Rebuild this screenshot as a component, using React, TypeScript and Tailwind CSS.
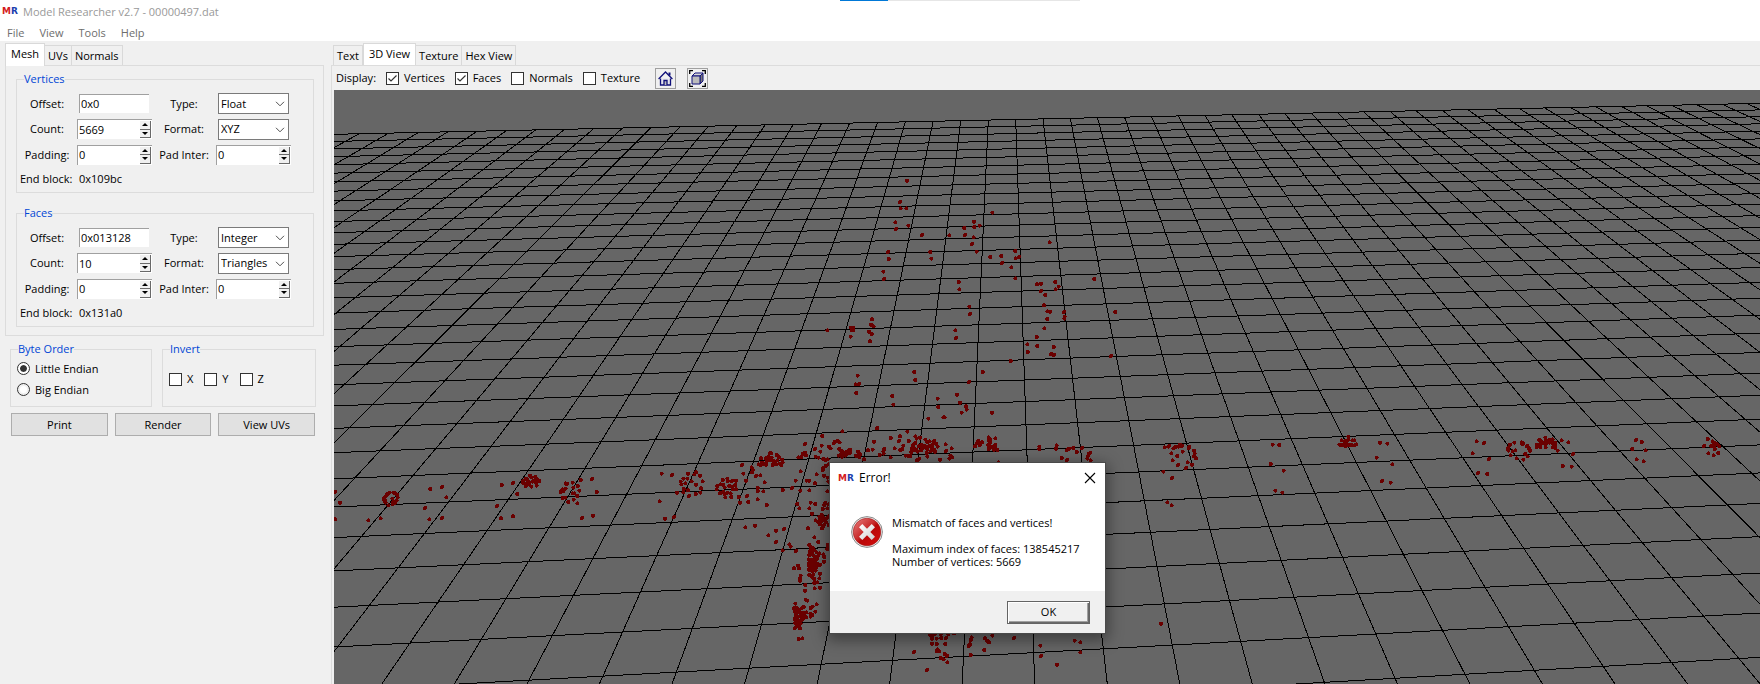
import React, { useId } from "react";

type Pair = [number, number];

const rowEnds = (j: number): Pair => [
  (4.357 * j + 134.3) / (1 - 0.01968 * j),
  (4.397 * j + 103.3) / (1 - 0.01965 * j),
];

const columnEnds = (k: number) => {
  const top = (1015.7 + 29.185 * k) / (1 + 0.001762 * k);
  return { top, topY: 134.3 - 0.02174 * (top - 334), bottom: 1034.7 + 72.55 * k };
};

const gridPath = [
  ...Array.from({ length: 33 }, (_, j) => {
    const [l, r] = rowEnds(j);
    return `M334 ${l.toFixed(1)}L1760 ${r.toFixed(1)}`;
  }),
  ...Array.from({ length: 52 }, (_, i) => {
    const c = columnEnds(i - 23);
    return `M${c.top.toFixed(1)} ${c.topY.toFixed(1)}L${c.bottom.toFixed(1)} 684`;
  }),
].join("");

/* Vertex clouds: origin in scene units, points in thirds of a unit. */
const clouds: { origin: Pair; points: string }[] = [
  {
    origin: [800, 90],
    points:
      "321,272 300,336 302,355 319,355 286,397 288,417 325,407 366,435 448,436 577,368 522,395 523,411 539,407 493,414 495,435 521,442 516,462 530,485 264,486 266,507 391,486 394,506 571,501 604,498 606,519 646,483 657,501 647,505 634,532 646,565 749,457 883,567 250,545 252,567 476,576 478,598 711,583 723,581 723,603 736,615 766,576 776,590 767,598 732,646 742,664 750,665 742,687 792,666 794,680 793,686 946,666 508,650 510,672 466,721 468,744 82,721 153,713 160,713 155,720 160,720 152,740 216,688 213,704 221,709 207,725 215,732 210,754 733,715 710,741 712,768 682,763 683,786 761,771 753,792 762,795 933,798 632,813 548,846 507,876 343,846 346,870 173,857 167,883 177,882 169,909 277,918 280,944 413,926 415,951 471,914 480,938 498,949 500,959 485,968 576,968 385,986 430,982 434,982 231,1014 127,1024 67,1039",
  },
  {
    origin: [330, 430],
    points:
      "15,186 30,218 16,268 115,271 152,265 178,188 190,188 197,190 202,195 203,203 200,212 196,218 188,222 175,226 167,218 162,208 163,202 168,198 172,192 187,206 190,214 165,213 301,177 336,171 349,202 285,234 298,268 336,264 515,165 549,159 562,192 501,228 513,265 549,259 600,137 604,142 616,141 588,146 580,152 592,150 596,156 612,152 622,148 628,153 608,155 618,158 579,158 586,162 597,162 588,168 604,170 620,167 711,162 707,160 728,158 752,150 786,147 743,168 730,173 698,178 692,186 700,184 694,182 748,182 733,190 728,190 742,198 731,209 715,216 706,203 698,204 742,220 707,176 800,186 756,264 789,257 995,131 1026,135 989,214 1005,266 1032,261 1041,188 1074,131 1098,127 1093,133 1110,137 1072,146 1060,146 1052,155 1054,163 1066,160 1085,154 1118,154 1061,177 1074,181 1098,164 1113,175 1097,192 1077,198 1060,187 1111,188 1178,150 1192,146 1193,153 1206,153 1218,152 1172,163 1162,168 1160,178 1180,165 1184,172 1198,168 1208,170 1216,165 1218,178 1180,186 1184,194 1192,188 1202,190 1186,202 1204,201 1170,190 1208,178 1226,201 1230,218 1251,198 1255,216 1248,152 1240,131 1236,105 1265,112 1268,120 1266,127 1278,138 1291,136 1304,157 1283,174 1283,183 1300,184 1283,208 1310,225 1246,292 1275,287 1315,316 1320,69 1308,85 1293,85 1316,80 1286,103 1292,105 1296,98 1302,102 1308,104 1310,95 1318,90",
  },
  {
    origin: [770, 425],
    points:
      "321,10 217,19 412,20 157,33 105,57 195,50 202,48 209,52 192,54 312,50 362,39 390,34 436,34 440,41 450,38 387,48 416,48 466,44 472,52 479,49 492,48 486,60 498,56 503,65 527,58 545,70 528,78 541,92 547,97 538,101 155,62 135,72 151,80 177,65 182,70 105,83 98,87 108,91 85,97 93,97 137,95 145,98 160,102 166,106 173,103 208,72 213,77 218,80 224,84 229,80 236,76 241,74 233,86 226,92 213,88 206,92 216,95 240,84 264,80 270,88 258,92 268,97 282,103 308,74 294,76 343,72 340,80 329,90 341,86 362,97 374,70 391,75 400,62 397,72 407,92 414,92 421,93 425,70 428,76 433,70 438,75 424,81 447,64 453,60 458,70 464,62 443,80 453,76 468,66 472,72 480,62 486,68 492,75 483,78 495,80 470,84 447,102 441,106 472,95 510,104 430,60 436,54 656,37 625,48 620,55 615,64 630,60 636,52 656,45 661,44 676,40 660,54 655,60 662,66 656,72 670,66 676,60 676,72 682,75 672,74 686,112 3,85 5,98 20,90 27,97 10,108 15,115 22,106 36,104 38,112 20,118 30,116 34,120 8,120 92,139 77,167 110,167 117,167 140,148 135,175 162,152 173,158 175,170 160,128 158,135 168,122 175,118 66,189 38,195 91,197 118,196 172,199 82,237 88,250 122,233 118,250 136,237 166,233 163,240 175,238 158,252 172,250 126,266 148,275 155,270 160,278 150,284 142,290 137,286 155,288 162,284 168,292 150,298 163,298 160,303 170,280 175,274 177,300 156,310 114,310 42,312 18,317 18,351 58,358 62,365 38,376 78,378 133,337 145,351 173,360 118,360 122,366 128,368 172,372 120,378 132,376 127,384 140,382 148,385 118,390 130,392 138,396 145,392 160,388 163,396 162,410 116,403 123,405 132,404 140,402 118,412 127,412 136,411 116,420 124,422 134,420 142,416 150,420 120,428 130,430 139,428 117,434 127,438 137,437 84,422 87,430 72,430 92,452 90,460 90,467 130,448 125,455 133,462 118,450 150,446 148,460 142,472 133,474 150,488 134,490 106,480 105,497 107,524 112,527 76,536 140,538 95,550 101,546 122,549 128,545 86,553 78,548 72,550 75,560 82,560 90,562 100,563 109,562 121,566 127,570 122,575 136,560 108,577 92,570 78,570 84,576 94,578 103,572 74,582 82,586 92,588 98,582 76,594 84,597 92,595 88,603 80,604 75,609 90,610 86,642 97,640",
  },
  {
    origin: [820, 430],
    points:
      "658,50 658,57 710,46 708,56 741,60 747,56 760,54 786,54 770,66 725,84 741,90 806,72 811,68 804,78 802,86 812,91 1034,52 1045,50 1048,47 1060,55 1066,51 1075,50 1080,44 1086,48 1108,50 1106,54 1088,65 1054,70 1072,78 1058,91 1074,105 1103,97 1116,104 1098,114 1122,62 1124,70 1122,78 1128,85 1030,125 1056,144 1042,217 1055,226 1358,44 1378,45 1352,102 1391,122 1366,182 1387,188 1023,581 330,614 338,616 345,612 362,614 385,612 402,610 336,626 350,626 364,624 378,624 336,641 350,642 376,642 352,658 358,664 350,664 374,672 381,678 362,684 371,688 382,697 282,666 321,720 455,622 452,630 450,643 446,648 452,675 495,625 517,617 502,633 507,637 493,660 582,624 661,647 663,678 711,704 764,632 781,637 781,667",
  },
  {
    origin: [1270, 430],
    points:
      "330,38 352,41 320,83 367,103 336,153 362,158 215,31 225,33 235,20 235,28 247,31 253,31 230,34 229,40 208,44 216,45 222,45 226,48 234,46 241,44 247,46 254,46 259,43 620,34 642,39 608,70 657,87 624,129 652,132 733,38 720,44 714,54 715,62 722,76 736,61 728,64 740,85 755,37 760,40 757,43 771,48 776,54 780,62 766,72 773,79 760,89 826,23 808,30 815,34 827,32 837,30 848,28 812,38 820,40 828,42 838,38 849,40 856,38 801,44 810,48 801,51 811,52 827,52 848,52 856,48 856,54 863,62 845,36 875,31 895,37 909,72 878,108 905,110 1098,30 1115,36 1087,57 1127,61 1100,88 1121,94 1313,27 1328,34 1332,38 1302,48 1340,42 1348,49 1324,48 1332,50 1334,57 1345,69 1315,70 1331,76",
  },
];

const vertexPath = clouds
  .map(({ origin: [ox, oy], points }) =>
    points
      .split(" ")
      .map((p) => {
        const [x, y] = p.split(",").map(Number);
        return `M${(ox + x / 3).toFixed(1)} ${(oy + y / 3).toFixed(1)}h.01`;
      })
      .join(""),
  )
  .join("");

function Logo() {
  return (
    <span aria-hidden="true" className="flex w-4 shrink-0 justify-center font-['DejaVu_Sans',sans-serif] text-[9px] leading-[9px] font-bold">
      <span className="text-[#d41c1c]">M</span>
      <span className="text-[#1b3fae]">R</span>
    </span>
  );
}

function Tab({ label, active }: { label: string; active?: boolean }) {
  return (
    <button
      type="button"
      role="tab"
      aria-selected={!!active}
      className={
        active
          ? "-mb-px h-[23px] border border-b-0 border-[#d9d9d9] bg-white px-[5px] pb-0.5 whitespace-nowrap"
          : "h-5 border border-b-0 border-l-0 border-[#d9d9d9] bg-[#f0f0f0] px-[3px] pt-px whitespace-nowrap first:border-l"
      }
    >
      {label}
    </button>
  );
}

function Spin({ label, value }: { label: string; value: string }) {
  const id = useId();
  return (
    <>
      <label htmlFor={id} className="text-center whitespace-nowrap">{label}</label>
      <div className="flex h-5 w-[75px] border-t border-l border-[#a0a0a0] bg-white py-px pr-px">
        <input id={id} type="text" defaultValue={value} className="w-full min-w-0 bg-transparent pl-px outline-none" />
        <div className="flex w-[11px] shrink-0 flex-col">
          {["M1 4L4 1L7 4Z", "M1 1L4 4L7 1Z"].map((d, i) => (
            <button
              key={d}
              type="button"
              aria-label={i === 0 ? `Increase ${label}` : `Decrease ${label}`}
              className="flex flex-1 items-center justify-center border-r border-b border-[#696969] bg-[#f0f0f0]"
            >
              <svg viewBox="0 0 8 5" className="h-[5px] w-2"><path d={d} /></svg>
            </button>
          ))}
        </div>
      </div>
    </>
  );
}

function Entry({ label, value }: { label: string; value: string }) {
  const id = useId();
  return (
    <>
      <label htmlFor={id} className="text-center whitespace-nowrap">{label}</label>
      <input
        id={id}
        type="text"
        defaultValue={value}
        className="ml-0.5 h-[19px] w-[70px] border-t border-l border-[#a0a0a0] bg-white pb-px pl-px outline-none"
      />
    </>
  );
}

function Choice({ label, options }: { label: string; options: string[] }) {
  const id = useId();
  return (
    <>
      <label htmlFor={id} className="text-center whitespace-nowrap">{label}</label>
      <div className="relative ml-0.5 w-[71px]">
        <select id={id} className="h-[21px] w-full appearance-none border border-[#7a7a7a] bg-white pl-0.5 outline-none">
          {options.map((o) => <option key={o}>{o}</option>)}
        </select>
        <svg viewBox="0 0 10 6" className="pointer-events-none absolute top-2 right-1 h-1.5 w-2.5" fill="none" stroke="#505050">
          <path d="M1 .8L5 4.8L9 .8" />
        </svg>
      </div>
    </>
  );
}

function Group({ title, className, children }: { title: string; className?: string; children: React.ReactNode }) {
  return (
    <fieldset className={`border border-[#dcdcdc] ${className ?? ""}`}>
      <legend className="ml-[7px] h-4 leading-4 text-[#0046d5]">{title}</legend>
      {children}
    </fieldset>
  );
}

function BlockFields({ title, offset, count, type, format, end }: {
  title: string; offset: string; count: string; type: string[]; format: string[]; end: string;
}) {
  return (
    <Group title={title} className="h-[122px]">
      <div className="mt-[5px] grid grid-cols-[60px_75px_64px_75px] grid-rows-[23px_28px_23px_26px] items-center">
        <Entry label="Offset:" value={offset} />
        <Choice label="Type:" options={type} />
        <Spin label="Count:" value={count} />
        <Choice label="Format:" options={format} />
        <Spin label="Padding:" value="0" />
        <Spin label="Pad Inter:" value="0" />
        <span className="pl-[3px] whitespace-nowrap">End block:</span>
        <output className="pl-0.5">{end}</output>
      </div>
    </Group>
  );
}

function Check({ label, checked }: { label: string; checked?: boolean }) {
  return (
    <label className="flex items-center gap-[5px]">
      <span className="relative flex">
        <input type="checkbox" defaultChecked={checked} className="peer size-[13px] appearance-none border border-[#333] bg-white" />
        <svg viewBox="0 0 13 13" className="pointer-events-none absolute inset-0 hidden size-[13px] peer-checked:block" fill="none" stroke="#333" strokeWidth="1.2">
          <path d="M2.5 6.5L5 9L10.5 3.5" />
        </svg>
      </span>
      {label}
    </label>
  );
}

function Radio({ label, checked }: { label: string; checked?: boolean }) {
  return (
    <label className="flex h-[21px] items-center gap-[5px]">
      <input
        type="radio"
        name="byte-order"
        defaultChecked={checked}
        className="size-[13px] appearance-none rounded-full border border-[#333] bg-white bg-clip-content p-0.5 checked:bg-[#333] checked:shadow-[inset_0_0_0_2px_white]"
      />
      {label}
    </label>
  );
}

function PushButton({ children }: { children: string }) {
  return (
    <button type="button" className="h-[23px] flex-1 border border-[#adadad] bg-[#e1e1e1]">{children}</button>
  );
}

function HomeIcon() {
  return (
    <svg viewBox="0 0 15 15" className="size-[15px]" fill="none" stroke="#10107a" strokeWidth="1.3">
      <path d="M2.5 7.5V14H12.5V7.5" fill="#e4e4ec" />
      <path d="M6 14V9.5H9V14" fill="#bbb" />
      <path d="M.6 8L7.5 1L14.4 8" fill="none" />
      <path d="M11.5 1.5V4.5" strokeWidth="2" />
    </svg>
  );
}

function CubeIcon() {
  return (
    <svg viewBox="0 0 17 17" className="size-[17px]" fill="none">
      <path d="M.7 4V.7H4M13 .7H16.3V4M16.3 13V16.3H13M4 16.3H.7V13" stroke="#000" strokeWidth="1.3" />
      <path d="M3 6L6 3H14L11 6Z" fill="#d8d8d8" stroke="#10107a" />
      <path d="M11 6L14 3V11L11 14Z" fill="#777" stroke="#10107a" />
      <path d="M3 6H11V14H3Z" fill="#bcbcbc" stroke="#10107a" />
    </svg>
  );
}

function ErrorIcon() {
  return (
    <svg viewBox="0 0 32 32" className="size-8 shrink-0">
      <defs>
        <linearGradient id="err-red" x1="0" y1="0" x2="1" y2="1">
          <stop offset="0" stopColor="#e88080" />
          <stop offset=".45" stopColor="#c92a2a" />
          <stop offset=".55" stopColor="#b80808" />
          <stop offset="1" stopColor="#d80c0c" />
        </linearGradient>
        <linearGradient id="err-cross" x1="0" y1="0" x2="1" y2="1">
          <stop offset="0" stopColor="#fff" />
          <stop offset="1" stopColor="#cfcfcf" />
        </linearGradient>
      </defs>
      <circle cx="16" cy="16" r="15.4" fill="#f4f4f4" stroke="#8a8a8a" />
      <circle cx="16" cy="16" r="13.8" fill="url(#err-red)" stroke="#9c1414" strokeWidth=".6" />
      <path
        d="M11.3 8L16 12.7L20.7 8L24 11.3L19.3 16L24 20.7L20.7 24L16 19.3L11.3 24L8 20.7L12.7 16L8 11.3Z"
        fill="url(#err-cross)"
      />
    </svg>
  );
}

function ErrorDialog() {
  return (
    <div
      role="alertdialog"
      aria-label="Error!"
      className="absolute top-[373px] left-[496px] flex w-[275px] flex-col bg-white shadow-[0_0_0_1px_#4a4a4a,0_4px_14px_3px_rgba(0,0,0,0.4)]"
    >
      <div className="flex h-[30px] items-center gap-[5px] pr-[9px] pl-2 text-[12px]">
        <Logo />
        <span className="flex-1">Error!</span>
        <button type="button" aria-label="Close" className="flex">
          <svg viewBox="0 0 12 12" className="size-3" fill="none" stroke="#000" strokeWidth="1.1">
            <path d="M1 1L11 11M11 1L1 11" />
          </svg>
        </button>
      </div>
      <div className="flex h-[98px] items-start gap-[9px] px-[21px] pt-[23px]">
        <ErrorIcon />
        <div className="text-[11px] leading-[13px] whitespace-nowrap">
          <p>Mismatch of faces and vertices!</p>
          <p className="mt-[13px]">Maximum index of faces: 138545217</p>
          <p>Number of vertices: 5669</p>
        </div>
      </div>
      <div className="flex h-[42px] items-center justify-end bg-[#f0f0f0] pr-[15px]">
        <button
          type="button"
          className="h-[23px] w-[83px] border border-[#646464] bg-[#f0f0f0] text-[11px] shadow-[inset_1px_1px_0_#fff,inset_-1px_-1px_0_#696969,inset_-2px_-2px_0_#a0a0a0]"
        >
          OK
        </button>
      </div>
    </div>
  );
}

export default function App() {
  return (
    <div className="relative flex min-h-screen flex-col bg-[#f0f0f0] font-['Open_Sans','Noto_Sans',sans-serif] text-[11px] leading-4 text-black">
      <div aria-hidden="true" className="absolute top-0 left-[840px] flex h-px w-60">
        <span className="w-12 bg-[#0078d7]" />
        <span className="flex-1 bg-[#e6e6e6]" />
      </div>
      <header className="h-[41px] bg-white">
        <h1 className="flex h-[23px] items-center gap-[5px] pl-0.5 text-[11px] text-[#999]">
          <Logo />
          Model Researcher v2.7 - 00000497.dat
        </h1>
        <nav className="flex h-[18px] items-center gap-[15px] pt-px pl-[7px] text-[#6d6d6d]">
          {["File", "View", "Tools", "Help"].map((m) => <button key={m} type="button">{m}</button>)}
        </nav>
      </header>

      <div className="flex flex-1">
        <aside className="w-[331px] shrink-0 pl-[5px]">
          <div role="tablist" className="flex h-6 items-end">
            <Tab label="Mesh" active />
            <Tab label="UVs" />
            <Tab label="Normals" />
          </div>
          <div className="flex h-[271px] w-[319px] flex-col gap-3 border border-[#dcdcdc] pt-[5px] pr-[9px] pl-2.5">
            <BlockFields title="Vertices" offset="0x0" count="5669" type={["Float"]} format={["XYZ"]} end="0x109bc" />
            <BlockFields title="Faces" offset="0x013128" count="10" type={["Integer"]} format={["Triangles"]} end="0x131a0" />
          </div>
          <div className="flex w-[311px] gap-2.5 pt-[5px] pl-[5px]">
            <Group title="Byte Order" className="h-[66px] w-[142px]">
              <div className="pt-px pl-1.5">
                <Radio label="Little Endian" checked />
                <Radio label="Big Endian" />
              </div>
            </Group>
            <Group title="Invert" className="h-[66px] flex-1">
              <div className="flex gap-[11px] pt-3.5 pl-1.5">
                <Check label="X" />
                <Check label="Y" />
                <Check label="Z" />
              </div>
            </Group>
          </div>
          <div className="flex w-[310px] gap-[7px] pt-1.5 pl-1.5">
            <PushButton>Print</PushButton>
            <PushButton>Render</PushButton>
            <PushButton>View UVs</PushButton>
          </div>
        </aside>

        <main className="flex min-w-0 flex-1 flex-col">
          <div role="tablist" className="flex h-6 items-end pl-0.5">
            <Tab label="Text" />
            <Tab label="3D View" active />
            <Tab label="Texture" />
            <Tab label="Hex View" />
          </div>
          <div className="flex flex-1 flex-col border-t border-l border-[#dcdcdc] pl-0.5">
            <div className="flex h-6 items-center pl-0.5">
              <span>Display:</span>
              <div className="flex items-center gap-2.5 pl-2.5">
                <Check label="Vertices" checked />
                <Check label="Faces" checked />
                <Check label="Normals" />
                <Check label="Texture" />
              </div>
              <button type="button" aria-label="Home view" className="ml-[15px] flex size-[21px] items-center justify-center border border-[#a0a0a0]">
                <HomeIcon />
              </button>
              <button type="button" aria-label="Fit view" className="ml-[11px] flex size-[21px] items-center justify-center border border-[#a0a0a0]">
                <CubeIcon />
              </button>
            </div>
            <div className="relative min-h-[560px] flex-1 overflow-hidden bg-[#666]">
              <svg
                viewBox="334 90 1426 594"
                preserveAspectRatio="xMinYMin slice"
                className="absolute inset-0 size-full"
                shapeRendering="crispEdges"
                fill="none"
              >
                <path d={gridPath} stroke="#000" />
                <path d={vertexPath} stroke="#6a0000" strokeWidth="4" strokeLinecap="round" />
              </svg>
              <ErrorDialog />
            </div>
          </div>
        </main>
      </div>
    </div>
  );
}
